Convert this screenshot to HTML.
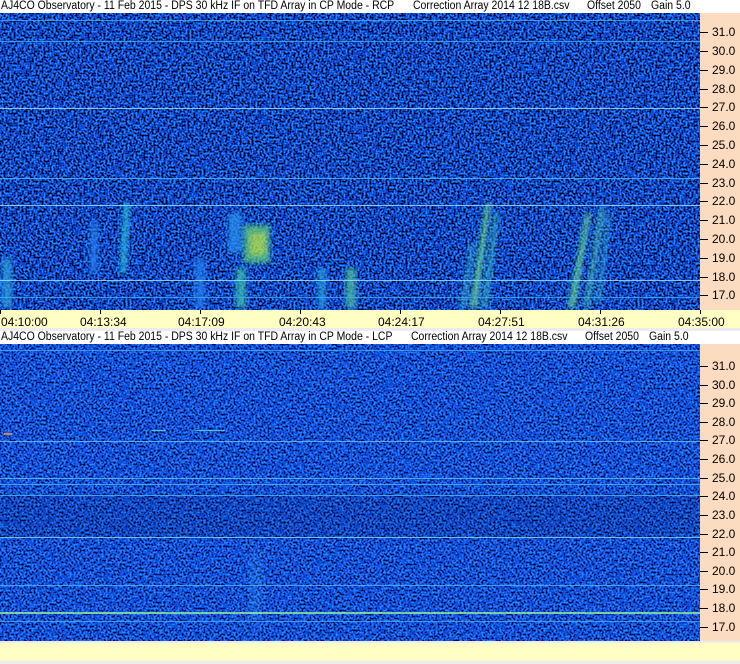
<!DOCTYPE html>
<html><head><meta charset="utf-8">
<style>
html,body{margin:0;padding:0;width:740px;height:664px;overflow:hidden;background:#ececf0;font-family:"Liberation Sans",sans-serif;}
.a{position:absolute;}
.t{position:absolute;font-size:11.5px;line-height:13px;color:#000;white-space:nowrap;transform:scaleX(0.91);transform-origin:0 0;}
.title{background:#fff;height:13px;left:0;width:740px;}
.yel{background:#ffffc4;left:0;width:740px;height:18px;}
.peach{background:#fcdcc0;left:700px;width:40px;}
.tk{position:absolute;left:0;width:8px;height:1px;background:#000;}
.lb{position:absolute;left:12px;font-size:12px;line-height:12px;}
.tm{position:absolute;font-size:12px;top:5px;}
.vt{position:absolute;top:0;width:1px;height:4px;background:#000;}
</style></head><body>
<svg width="0" height="0" style="position:absolute">
<defs>
<filter id="n1" x="0" y="0" width="100%" height="100%" color-interpolation-filters="sRGB">
<feTurbulence type="fractalNoise" baseFrequency="0.5" numOctaves="1" seed="3" result="t"/>
<feColorMatrix in="t" type="matrix" values="3.2 0 0 0 -1.05  3.2 0 0 0 -1.05  3.2 0 0 0 -1.05  0 0 0 0 1"/>
<feComponentTransfer>
<feFuncR type="table" tableValues="0 0 0.03 0.06 0.09 0.12"/>
<feFuncG type="table" tableValues="0 0.07 0.2 0.3 0.4 0.55"/>
<feFuncB type="table" tableValues="0.05 0.3 0.7 0.85 0.95 1"/>
</feComponentTransfer>
</filter>
<filter id="n2" x="0" y="0" width="100%" height="100%" color-interpolation-filters="sRGB">
<feTurbulence type="fractalNoise" baseFrequency="0.5" numOctaves="1" seed="7" result="t"/>
<feColorMatrix in="t" type="matrix" values="3 0 0 0 -0.95  3 0 0 0 -0.95  3 0 0 0 -0.95  0 0 0 0 1"/>
<feComponentTransfer>
<feFuncR type="table" tableValues="0 0.02 0.05 0.07 0.1 0.12"/>
<feFuncG type="table" tableValues="0.02 0.12 0.25 0.33 0.42 0.55"/>
<feFuncB type="table" tableValues="0.15 0.5 0.8 0.9 0.97 1"/>
</feComponentTransfer>
</filter>
<filter id="b" color-interpolation-filters="sRGB"><feGaussianBlur stdDeviation="2.5"/></filter>
<filter id="b2" color-interpolation-filters="sRGB"><feGaussianBlur stdDeviation="6"/></filter>
</defs>
</svg>

<div class="a title" style="top:0"></div>
<div class="t" style="left:1px;top:0">AJ4CO Observatory - 11 Feb 2015 - DPS 30 kHz IF on TFD Array in CP Mode - RCP</div>
<div class="t" style="left:413px;top:0">Correction Array 2014 12 18B.csv</div>
<div class="t" style="left:587px;top:0">Offset 2050</div>
<div class="t" style="left:651px;top:0">Gain 5.0</div>

<svg class="a" style="left:0;top:13px" width="700" height="297">
<rect width="700" height="297" filter="url(#n1)"/>
<g filter="url(#b)" opacity="0.75">
<path d="M124 190 L130 190 L126 260 L120 260Z" fill="#30c8e0"/>
<rect x="244" y="212" width="26" height="38" fill="#60d080"/>
<rect x="250" y="220" width="16" height="22" fill="#c0f040"/>
<rect x="228" y="200" width="14" height="40" fill="#2a90f0"/>
<rect x="236" y="255" width="10" height="40" fill="#40c0b0"/>
<rect x="346" y="255" width="10" height="40" fill="#50c0a0"/>
<rect x="318" y="255" width="8" height="40" fill="#2aa0e0"/>
<path d="M470 295 L477 295 L491 190 L486 190Z" fill="#70e090"/>
<path d="M482 295 L487 295 L499 200 L495 200Z" fill="#40c0c0"/>
<path d="M460 295 L465 295 L475 230 L471 230Z" fill="#40b0d0"/>
<path d="M568 295 L575 295 L591 200 L586 200Z" fill="#70e090"/>
<path d="M584 295 L589 295 L605 195 L600 195Z" fill="#50c0b0"/>
<path d="M596 290 L600 290 L611 200 L608 200Z" fill="#40b0d0"/>
<rect x="2" y="245" width="10" height="50" fill="#30a0e0"/>
<rect x="90" y="210" width="8" height="50" fill="#2a80f0"/>
<rect x="195" y="245" width="10" height="50" fill="#2a80f0"/>
</g>
<g opacity="0.8">
<rect x="0" y="7" width="700" height="1" fill="#40b0f0"/>
<rect x="0" y="28" width="700" height="1" fill="#40b0f0"/>
<rect x="0" y="95" width="700" height="1" fill="#a0e8ff"/>
<rect x="0" y="165" width="700" height="1" fill="#50c0f0"/>
<rect x="0" y="192" width="700" height="1" fill="#a0e8ff"/>
<rect x="0" y="267" width="700" height="1" fill="#a0e8ff"/>
<rect x="0" y="284" width="700" height="1" fill="#40b0f0"/>
</g>
</svg>
<div class="a peach" style="top:13px;height:297px">
<div class="tk" style="top:19px"></div><div class="lb" style="top:13px">31.0</div>
<div class="tk" style="top:38px"></div><div class="lb" style="top:32px">30.0</div>
<div class="tk" style="top:57px"></div><div class="lb" style="top:51px">29.0</div>
<div class="tk" style="top:76px"></div><div class="lb" style="top:70px">28.0</div>
<div class="tk" style="top:94px"></div><div class="lb" style="top:88px">27.0</div>
<div class="tk" style="top:113px"></div><div class="lb" style="top:107px">26.0</div>
<div class="tk" style="top:132px"></div><div class="lb" style="top:126px">25.0</div>
<div class="tk" style="top:151px"></div><div class="lb" style="top:145px">24.0</div>
<div class="tk" style="top:170px"></div><div class="lb" style="top:164px">23.0</div>
<div class="tk" style="top:188px"></div><div class="lb" style="top:182px">22.0</div>
<div class="tk" style="top:207px"></div><div class="lb" style="top:201px">21.0</div>
<div class="tk" style="top:226px"></div><div class="lb" style="top:220px">20.0</div>
<div class="tk" style="top:245px"></div><div class="lb" style="top:239px">19.0</div>
<div class="tk" style="top:264px"></div><div class="lb" style="top:258px">18.0</div>
<div class="tk" style="top:282px"></div><div class="lb" style="top:276px">17.0</div>
</div>
<div class="a yel" style="top:310px">
<div class="vt" style="left:0"></div><div class="vt" style="left:100px"></div><div class="vt" style="left:200px"></div><div class="vt" style="left:300px"></div><div class="vt" style="left:400px"></div><div class="vt" style="left:500px"></div><div class="vt" style="left:600px"></div><div class="vt" style="left:700px"></div>
<div class="tm" style="left:1px">04:10:00</div>
<div class="tm" style="left:80px">04:13:34</div>
<div class="tm" style="left:178px">04:17:09</div>
<div class="tm" style="left:279px">04:20:43</div>
<div class="tm" style="left:378px">04:24:17</div>
<div class="tm" style="left:478px">04:27:51</div>
<div class="tm" style="left:578px">04:31:26</div>
<div class="tm" style="left:678px">04:35:00</div>
</div>

<div class="a title" style="top:331px"></div>
<div class="t" style="left:1px;top:331px">AJ4CO Observatory - 11 Feb 2015 - DPS 30 kHz IF on TFD Array in CP Mode - LCP</div>
<div class="t" style="left:411px;top:331px">Correction Array 2014 12 18B.csv</div>
<div class="t" style="left:585px;top:331px">Offset 2050</div>
<div class="t" style="left:649px;top:331px">Gain 5.0</div>

<svg class="a" style="left:0;top:344px" width="700" height="297">
<rect width="700" height="297" filter="url(#n2)"/>
<rect x="0" y="150" width="700" height="45" fill="#000830" opacity="0.12"/>
<g filter="url(#b2)" opacity="0.35">
<rect x="250" y="210" width="12" height="70" fill="#40a0ff"/>
</g>
<g opacity="0.8">
<rect x="0" y="6" width="700" height="1" fill="#40b0f0"/>
<rect x="0" y="97" width="700" height="1" fill="#60c8f0"/>
<rect x="0" y="134" width="700" height="1" fill="#60c8f0"/>
<rect x="0" y="140" width="700" height="1" fill="#50b8f0"/>
<rect x="0" y="151" width="700" height="1" fill="#50b8f0"/>
<rect x="0" y="193" width="700" height="1" fill="#80e0ff"/>
<rect x="0" y="241" width="700" height="1" fill="#50b8f0"/>
<rect x="0" y="268" width="700" height="2" fill="#90f0a0"/>
<rect x="0" y="277" width="700" height="1" fill="#40b0f0"/>
<rect x="4" y="89" width="8" height="2" fill="#f0a020"/>
<rect x="152" y="86" width="14" height="1" fill="#60e0c0"/>
<rect x="195" y="86" width="30" height="1" fill="#60e0c0"/>
</g>
</svg>
<div class="a peach" style="top:344px;height:297px">
<div class="tk" style="top:22px"></div><div class="lb" style="top:16px">31.0</div>
<div class="tk" style="top:41px"></div><div class="lb" style="top:35px">30.0</div>
<div class="tk" style="top:59px"></div><div class="lb" style="top:53px">29.0</div>
<div class="tk" style="top:78px"></div><div class="lb" style="top:72px">28.0</div>
<div class="tk" style="top:96px"></div><div class="lb" style="top:90px">27.0</div>
<div class="tk" style="top:115px"></div><div class="lb" style="top:109px">26.0</div>
<div class="tk" style="top:134px"></div><div class="lb" style="top:128px">25.0</div>
<div class="tk" style="top:152px"></div><div class="lb" style="top:146px">24.0</div>
<div class="tk" style="top:171px"></div><div class="lb" style="top:165px">23.0</div>
<div class="tk" style="top:190px"></div><div class="lb" style="top:184px">22.0</div>
<div class="tk" style="top:208px"></div><div class="lb" style="top:202px">21.0</div>
<div class="tk" style="top:227px"></div><div class="lb" style="top:221px">20.0</div>
<div class="tk" style="top:245px"></div><div class="lb" style="top:239px">19.0</div>
<div class="tk" style="top:264px"></div><div class="lb" style="top:258px">18.0</div>
<div class="tk" style="top:283px"></div><div class="lb" style="top:277px">17.0</div>
</div>
<div class="a yel" style="top:643px"></div>
</body></html>
